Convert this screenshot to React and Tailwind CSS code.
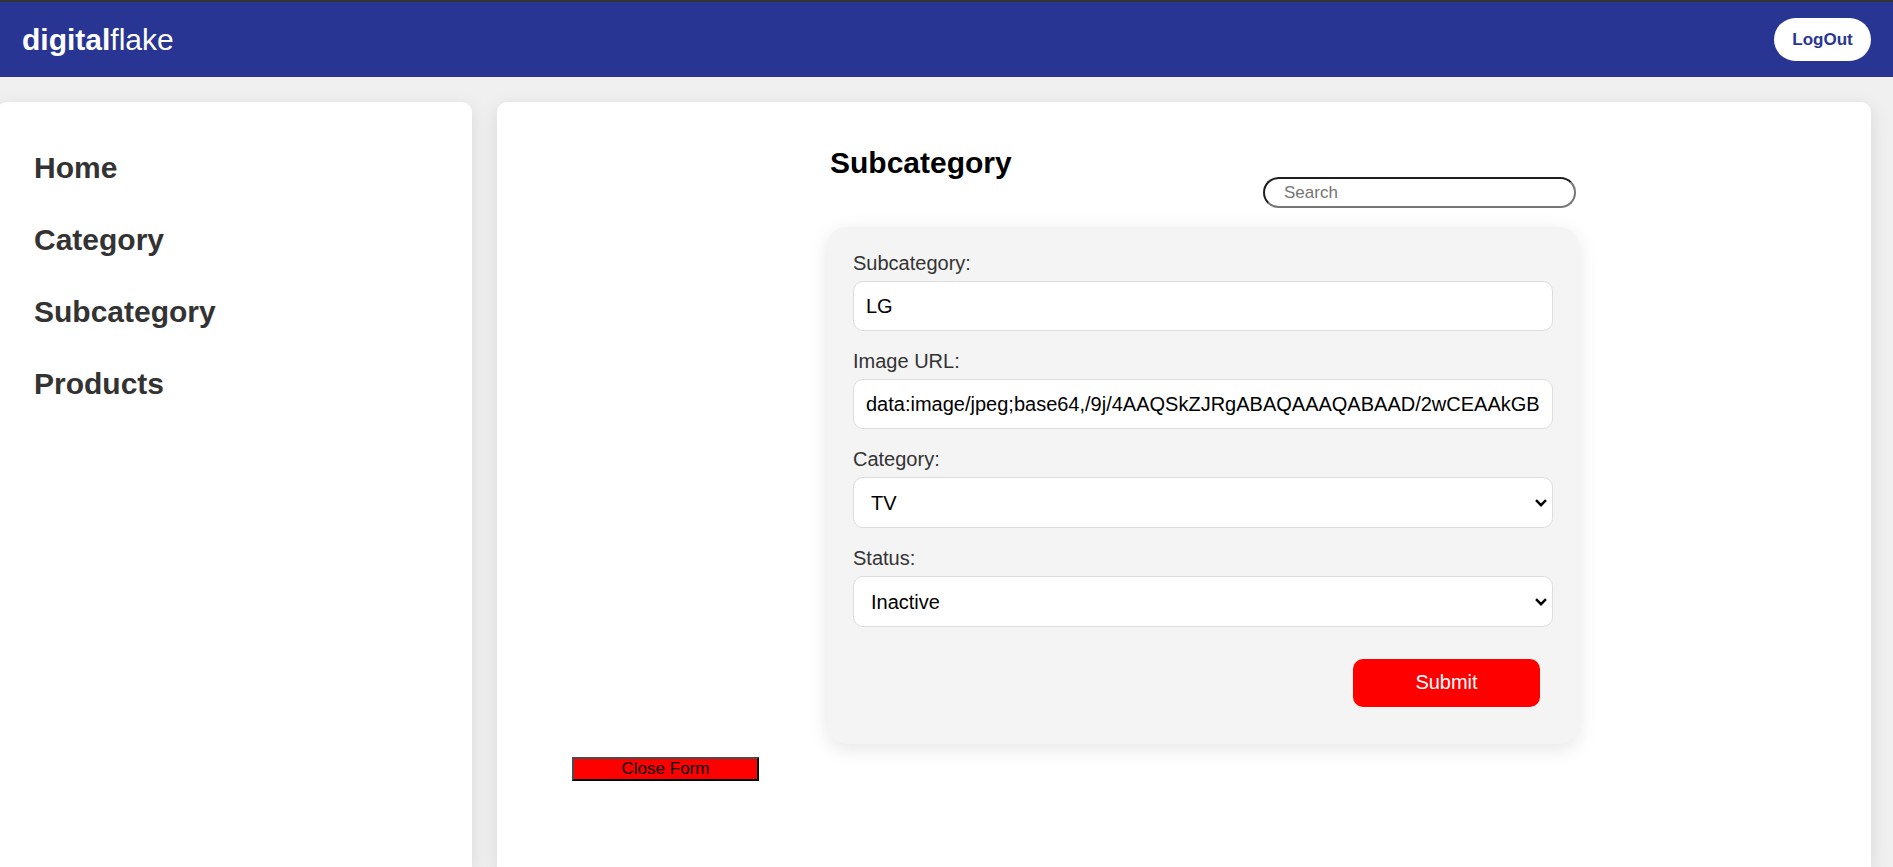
import { useState } from "react";

const NAV_ITEMS = ["Home", "Category", "Subcategory", "Products"];

const CONTROL =
  "w-full rounded-[10px] border border-[#dddddd] bg-white text-xl text-black";

function Field({ id, label, children }) {
  return (
    <div className="flex flex-col gap-1.5">
      <label htmlFor={id} className="text-xl leading-[23px] text-[#333333]">
        {label}
      </label>
      {children}
    </div>
  );
}

function TextInput({ id, value, onChange }) {
  return (
    <input
      id={id}
      type="text"
      value={value}
      onChange={(e) => onChange(e.target.value)}
      className={CONTROL + " h-[50px] px-3"}
    />
  );
}

function Select({ id, value, onChange, options }) {
  return (
    <div className="relative">
      <select
        id={id}
        value={value}
        onChange={(e) => onChange(e.target.value)}
        className={CONTROL + " block h-[51px] appearance-none pr-8 pl-[17px]"}
      >
        {options.map((option) => (
          <option key={option}>{option}</option>
        ))}
      </select>
      <svg
        viewBox="0 0 12 8"
        aria-hidden="true"
        className="pointer-events-none absolute top-1/2 right-1.5 h-2 w-3 -translate-y-1/2"
      >
        <path d="M1 1.2 6 6.2 11 1.2" fill="none" stroke="black" strokeWidth="2.4" />
      </svg>
    </div>
  );
}

function Header() {
  return (
    <header className="flex items-center justify-between border-t-2 border-[#333333] bg-[#283593] px-[22px] py-4">
      <div className="text-3xl leading-[34px] text-white">
        <span className="font-bold">digital</span>flake
      </div>
      <button
        type="button"
        className="h-[43px] w-[97px] rounded-full bg-white text-[17px] font-bold text-[#283593]"
      >
        LogOut
      </button>
    </header>
  );
}

function Sidebar() {
  return (
    <nav className="-ml-[3px] w-[475px] shrink-0 rounded-t-[10px] bg-white px-[37px] pt-[49px] shadow-[0_5px_19px_rgba(0,0,0,0.1)]">
      <ul className="flex flex-col gap-[38px]">
        {NAV_ITEMS.map((item) => (
          <li key={item}>
            <a
              href={"#" + item.toLowerCase()}
              className="block text-3xl leading-[34px] font-bold text-[#333333]"
            >
              {item}
            </a>
          </li>
        ))}
      </ul>
    </nav>
  );
}

function SubcategoryForm() {
  const [name, setName] = useState("LG");
  const [image, setImage] = useState(
    "data:image/jpeg;base64,/9j/4AAQSkZJRgABAQAAAQABAAD/2wCEAAkGB"
  );
  const [category, setCategory] = useState("TV");
  const [status, setStatus] = useState("Inactive");

  return (
    <form
      onSubmit={(e) => e.preventDefault()}
      className="flex flex-col gap-[19px] rounded-[20px] bg-[#f4f4f4] px-[26px] pt-[25px] pb-[37px] shadow-[0_5px_19px_rgba(0,0,0,0.1)]"
    >
      <Field id="name" label="Subcategory:">
        <TextInput id="name" value={name} onChange={setName} />
      </Field>
      <Field id="image" label="Image URL:">
        <TextInput id="image" value={image} onChange={setImage} />
      </Field>
      <Field id="category" label="Category:">
        <Select id="category" value={category} onChange={setCategory} options={["TV"]} />
      </Field>
      <Field id="status" label="Status:">
        <Select
          id="status"
          value={status}
          onChange={setStatus}
          options={["Active", "Inactive"]}
        />
      </Field>
      <div className="flex justify-end pt-[13px] pr-[13px]">
        <button
          type="submit"
          className="h-12 w-[187px] rounded-[10px] bg-[#ff0000] pb-0.5 text-xl text-white"
        >
          Submit
        </button>
      </div>
    </form>
  );
}

export default function App() {
  return (
    <div className="flex min-h-screen flex-col overflow-hidden bg-[#f0f0f0] font-['Liberation_Sans',Arial,sans-serif]">
      <Header />
      <div className="flex flex-1 gap-[25px] pt-[25px] pr-[22px]">
        <Sidebar />
        <main className="flex-1 rounded-t-[10px] bg-white pt-11 pr-[37px] pb-20 pl-[75px] shadow-[0_5px_19px_rgba(0,0,0,0.1)]">
          <section className="mx-auto flex max-w-[752px] flex-col gap-[19px]">
            <div className="flex items-start justify-between px-[3px]">
              <h1 className="text-3xl leading-[34px] font-bold text-black">Subcategory</h1>
              <input
                type="search"
                aria-label="Search"
                placeholder="Search"
                className="mt-[31px] h-[31px] w-[313px] rounded-full border-2 border-t-[#1f1f1f] border-r-[#767676] border-b-[#767676] border-l-[#1f1f1f] bg-white px-[19px] text-[17px] placeholder:text-[#757575]"
              />
            </div>
            <SubcategoryForm />
          </section>
          <button
            type="button"
            className="mt-[13px] flex h-6 w-[187px] items-center justify-center border-2 border-t-[#4c4c4c] border-r-black border-b-black border-l-[#4c4c4c] bg-[#ff0000] text-[17px] text-black"
          >
            Close Form
          </button>
        </main>
      </div>
    </div>
  );
}
